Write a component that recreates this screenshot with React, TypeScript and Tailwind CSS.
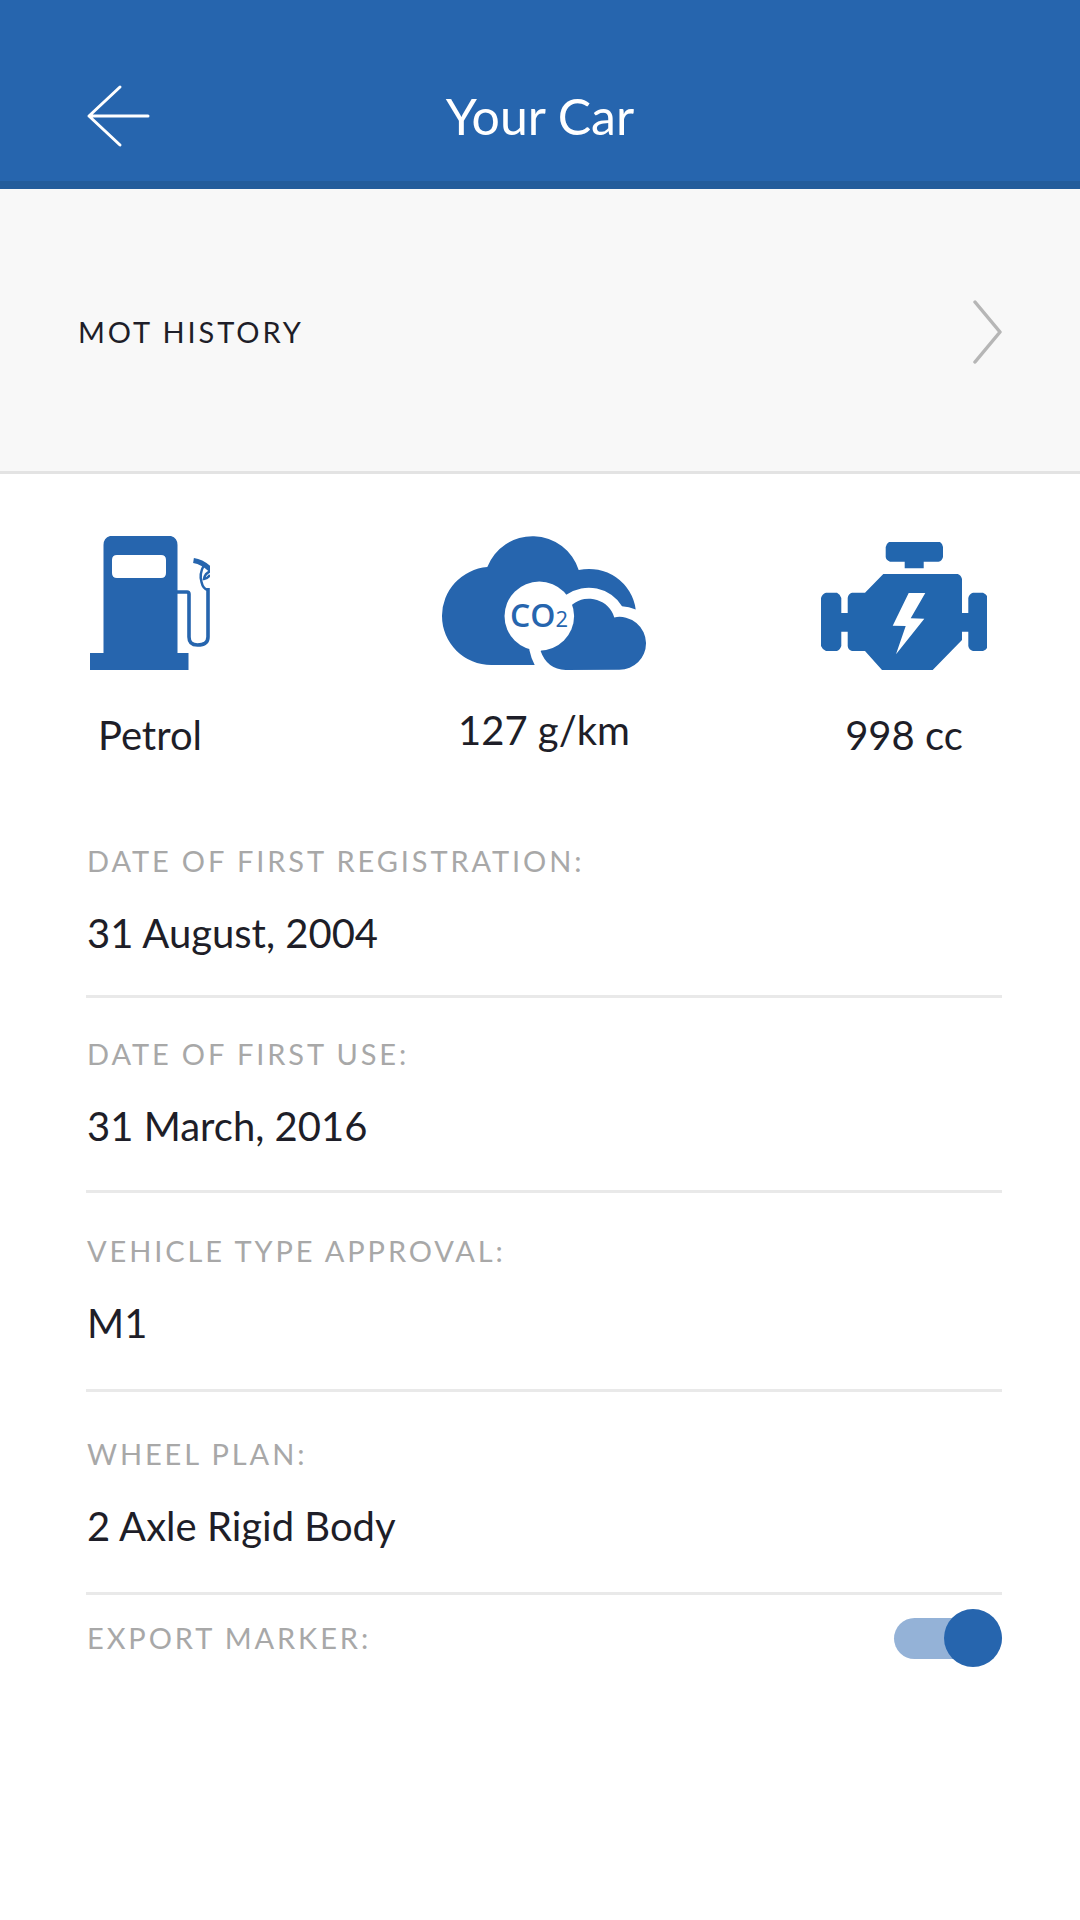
import React, { useState } from "react";

interface Detail {
  label: string;
  value: string;
  spacing: string;
}

const details: Detail[] = [
  { label: "Date of first registration:", value: "31 August, 2004", spacing: "pt-10 pb-[38px]" },
  { label: "Date of first use:", value: "31 March, 2016", spacing: "pt-10 pb-10" },
  { label: "Vehicle type approval:", value: "M1", spacing: "pt-[42px] pb-[42px]" },
  { label: "Wheel plan:", value: "2 Axle Rigid Body", spacing: "pt-[46px] pb-[42px]" },
];

const PetrolIcon = () => (
  <svg className="w-[120px] h-[134px]" viewBox="0 0 120 134" aria-hidden="true">
    <path
      fill="#2665ae"
      fillRule="evenodd"
      d="M20 0H81Q87.500 2 87.500 9V117H98.500V134H0V117H13.500V9Q13.500 2 20 0ZM27 19Q22 19 22 24V37Q22 42 27 42H71Q76 42 76 37V24Q76 19 71 19Z"
    />
    <g fill="none" stroke="#2665ae">
      <path strokeWidth="3.600" d="M87 56H97Q99 56 99 58V101Q99 109 107.500 109Q118 109 118 101V52" />
      <path strokeWidth="5" d="M103.500 24.500Q113 26 121 34" />
      <path strokeWidth="2.500" d="M114 29Q109 38 111.500 46Q113 53 118 54" />
      <path strokeWidth="2.500" d="M121 35Q115 37 114 43Q117 43 120 39" />
    </g>
  </svg>
);

const EmissionsIcon = () => (
  <svg className="w-[204px] h-[134px]" viewBox="0 0 204 135" preserveAspectRatio="none" aria-hidden="true">
    <path
      fill="#2665ae"
      d="M49.300 130A49.300 49.300 0 0 1 0 80.700A49.300 49.300 0 0 1 45.300 31.300A48.400 48.400 0 0 1 136.700 34.300A47 47 0 0 1 193.700 74Q187 71 180 70.700A38.800 38.800 0 0 0 124.700 59L97 81L87.300 114.700Q89 123 92.700 130Z"
    />
    <path
      fill="#2665ae"
      d="M130.700 68.700A26.500 26.500 0 0 1 172.300 82A26.500 26.500 0 0 1 204 108.300A26.500 26.500 0 0 1 177.500 134.800L123.700 135Q105 134 98.700 116L110 90Z"
    />
    <circle cx="97.300" cy="80.700" r="34.800" fill="#fff" />
    <text x="68" y="92" fill="#2665ae" fontFamily="'Open Sans', sans-serif" fontSize="32" fontWeight="600">
      CO<tspan fontSize="22" fontWeight="400">2</tspan>
    </text>
  </svg>
);

const EngineIcon = () => (
  <svg className="w-[166px] h-[128px]" viewBox="0 0 166 128" aria-hidden="true">
    <path
      fill="#2266ae"
      d="M68 0H119Q122 2 122 5V15Q121 19 117.500 19.700H102.700V26.300H83.700V19.700H69Q65 18 64.700 15V5Q65 2 68 0ZM62.300 32H136.700Q140 33 141 37V71H147.300V56Q148 52 152 50.700H162Q165 52 166 54V106Q165 108 162 109H152Q148 108 147.300 104V89.700H141V98L111.700 128H61L44 109H31Q27 108 26.700 104V89.700H20.300V104Q19 108 16 109H5Q1 107 0 104V56Q1 52 5 50.700H16Q19 52 20.300 56V71H26.700V56Q27 52 31 50.700H44Z"
    />
    <path fill="#fff" d="M87.700 51H104.300L89.700 76.300L103.300 76.700L75 112.300L84.700 84L71.700 83.700Z" />
  </svg>
);

const stats = [
  { text: "Petrol", icon: <PetrolIcon />, column: "justify-self-start pl-1", gap: "gap-[41px]" },
  { text: "127 g/km", icon: <EmissionsIcon />, column: "justify-self-center", gap: "gap-9" },
  { text: "998 cc", icon: <EngineIcon />, column: "justify-self-end pr-[15px]", gap: "gap-[41px]" },
];

const DetailRow: React.FC<Detail> = ({ label, value, spacing }) => (
  <div className={`flex flex-col gap-8 border-b-3 border-[#e9e9e9] px-px ${spacing}`}>
    <dt className="text-[29px] leading-8 tracking-widest uppercase text-[#a8a8a8]">{label}</dt>
    <dd className="text-[40px] leading-12">{value}</dd>
  </div>
);

export default function App() {
  const [exported, setExported] = useState(true);

  return (
    <div className="min-h-screen bg-white font-['Lato',sans-serif] text-[#1e1e28]">
      <header className="grid grid-cols-[1fr_auto_1fr] items-center bg-[#2665ae] border-b-8 border-[#235c9b] px-[86px] pt-[82px] pb-[31px] text-white">
        <button type="button" aria-label="Back" className="justify-self-start">
          <svg className="w-[64px] h-[66px]" viewBox="0 0 64 66" fill="none" stroke="currentColor" strokeWidth="3" strokeLinecap="round" strokeLinejoin="round">
            <path d="M62 33H3M34 4L3 33L34 62" />
          </svg>
        </button>
        <h1 className="text-[50px] leading-[68px]">Your Car</h1>
      </header>

      <a href="#mot-history" className="flex items-center justify-between bg-[#f8f8f8] border-b-3 border-[#e3e3e3] px-[78px] pt-[111px] pb-[107px]">
        <span className="text-[29px] leading-8 tracking-widest uppercase">MOT History</span>
        <svg className="w-[30px] h-[64px]" viewBox="0 0 30 64" fill="none" stroke="#b6b6b6" strokeWidth="3.500" strokeLinecap="round" strokeLinejoin="round">
          <path d="M3 2L28 32L3 62" />
        </svg>
      </a>

      <main className="pl-[86px] pr-[78px] pt-[62px] pb-16">
        <ul className="grid grid-cols-[1fr_auto_1fr]">
          {stats.map((s) => (
            <li key={s.text} className={`flex flex-col items-center ${s.column} ${s.gap}`}>
              <div className="flex h-[134px] items-end">{s.icon}</div>
              <span className="text-[40px] leading-12">{s.text}</span>
            </li>
          ))}
        </ul>

        <dl className="pt-[46px]">
          {details.map((d) => (
            <DetailRow key={d.label} {...d} />
          ))}
        </dl>

        <label className="flex items-center justify-between pt-[14px] pl-px text-[29px] leading-8 tracking-widest uppercase text-[#a8a8a8]">
          Export marker:
          <span className="relative flex h-[58px] w-[108px] items-center">
            <input
              type="checkbox"
              role="switch"
              checked={exported}
              onChange={(e) => setExported(e.target.checked)}
              className="peer h-[41px] w-full appearance-none rounded-full bg-[#d4d4d4] checked:bg-[#94b2d7]"
            />
            <span className="pointer-events-none absolute left-0 size-[58px] rounded-full bg-[#a8a8a8] peer-checked:left-auto peer-checked:right-0 peer-checked:bg-[#2665ae]" />
          </span>
        </label>
      </main>
    </div>
  );
}
